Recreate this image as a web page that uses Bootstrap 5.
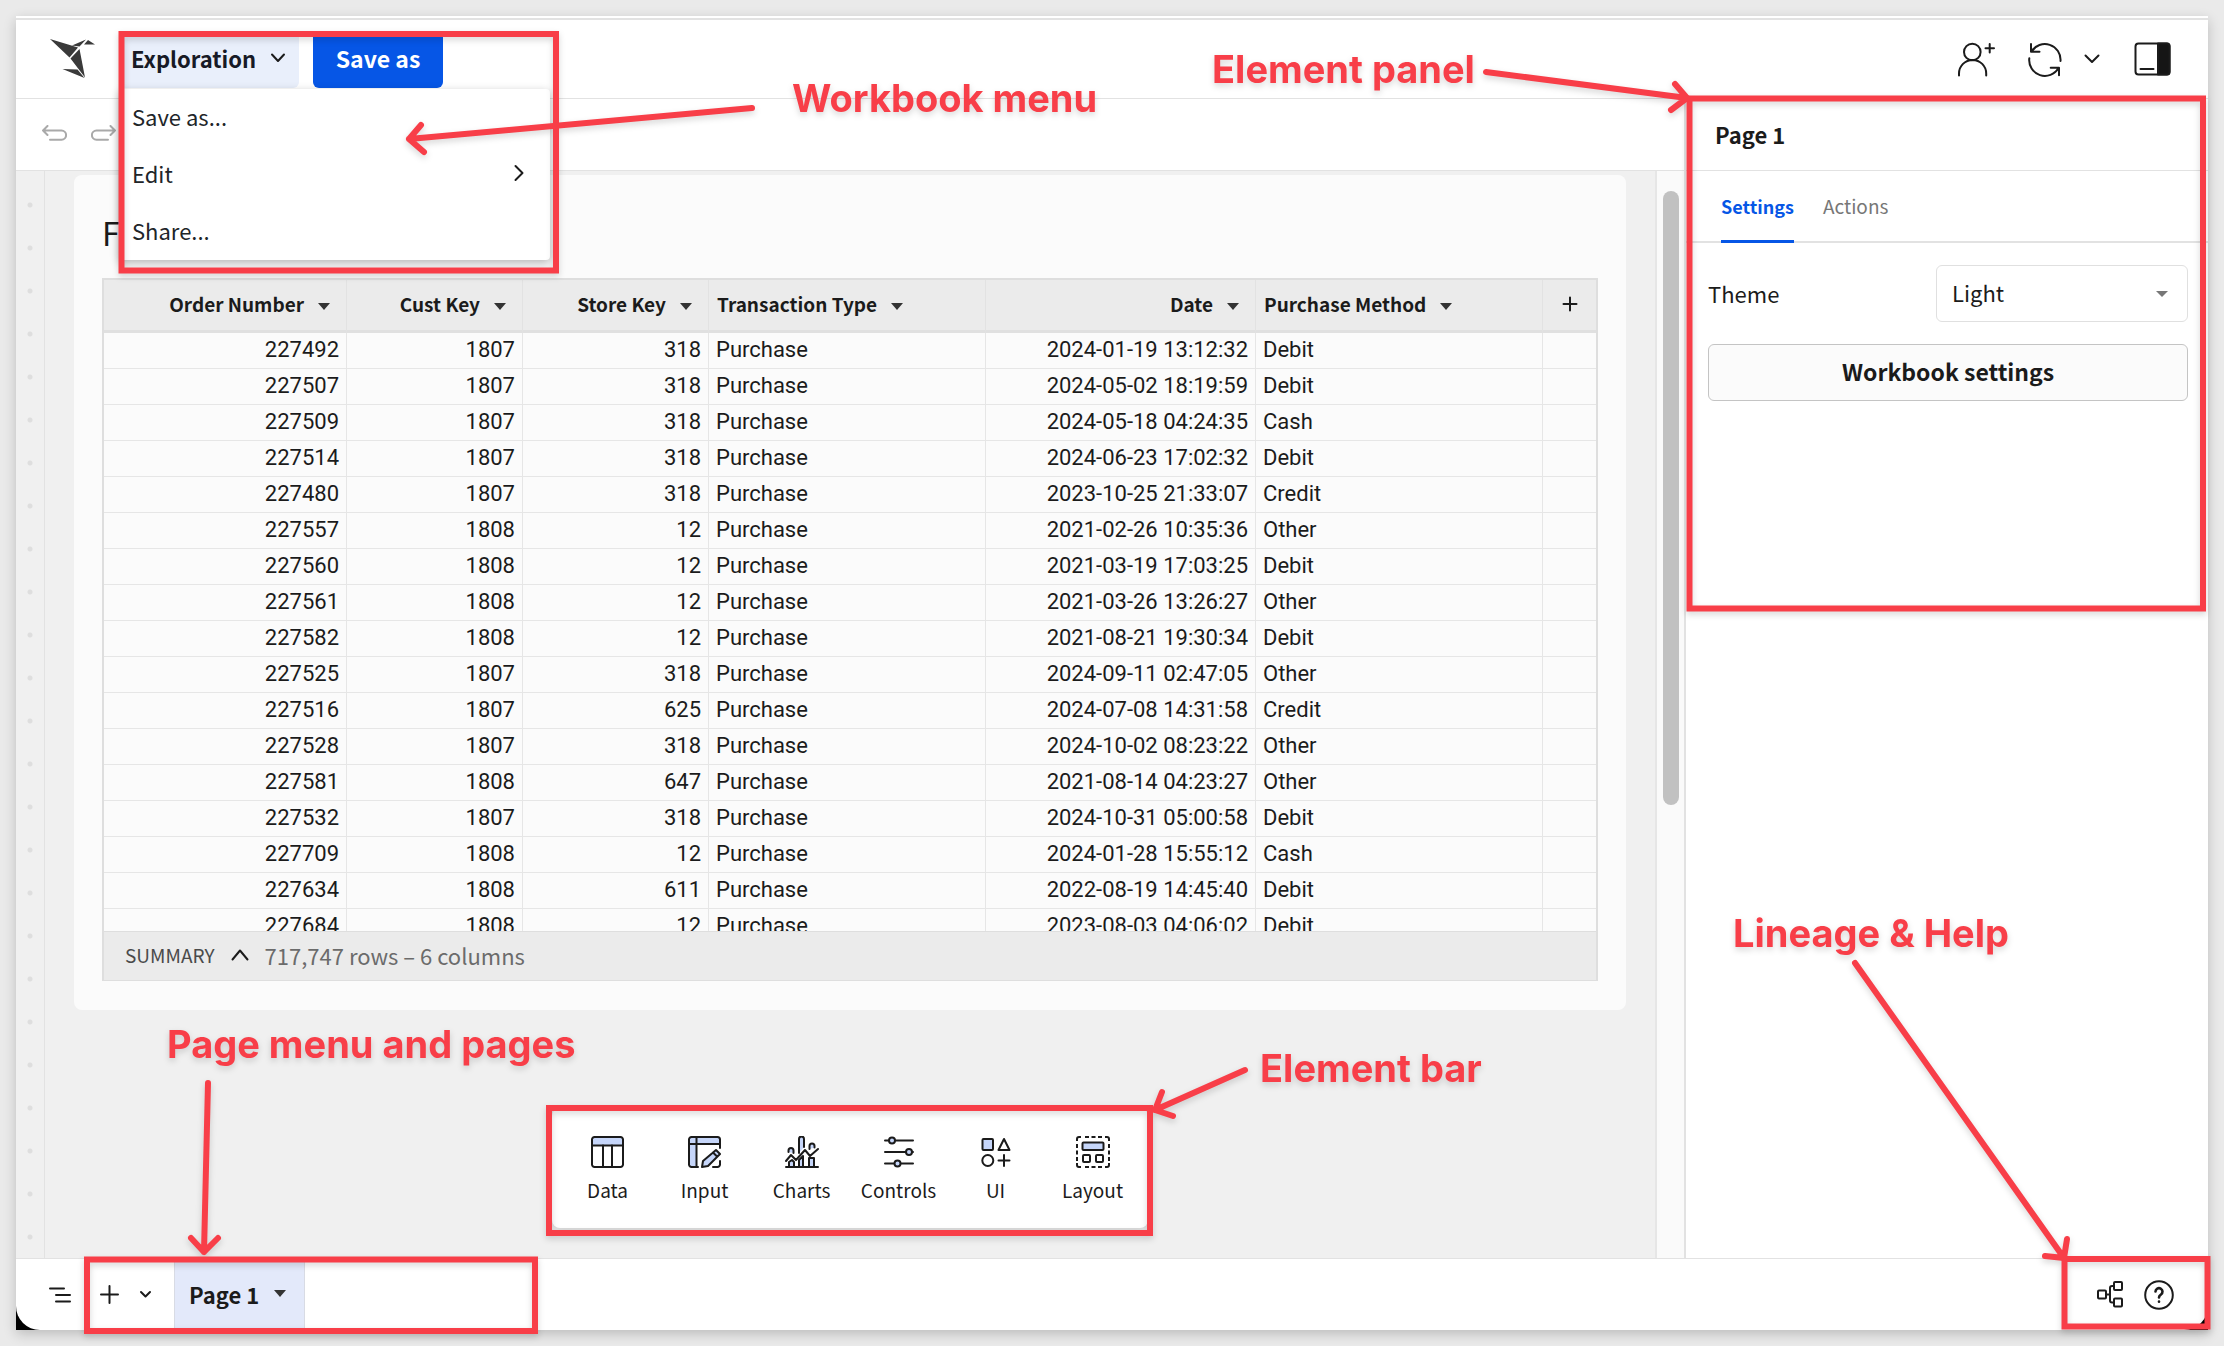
<!DOCTYPE html>
<html lang="en">
<head>
<meta charset="utf-8">
<meta name="viewport" content="width=device-width, initial-scale=1">
<title>Workbook</title>
<link rel="stylesheet" href="https://cdn.jsdelivr.net/npm/bootstrap@5.3.0/dist/css/bootstrap.min.css">
<style>
  :root { --line:#e2e2e2; --ink:#1b1b1b; --blue:#0656e6; --note:#f83e48; }
  body { background:#eaeaea; color:var(--ink); font-family:"Noto Sans CJK SC","Noto Sans",sans-serif; font-size:22px; line-height:32px; overflow:hidden; }
  svg { display:block; flex:none; }
  .ico { fill:none; stroke:var(--ink); stroke-width:2; stroke-linecap:round; stroke-linejoin:round; }
  .stage { min-height:100vh; padding:16px; }
  .app-window { background:#fff; box-shadow:0 4px 12px rgba(0,0,0,.2); border-top:2px solid #fff; }
  .plain-btn { background:none; border:0; padding:0; color:inherit; }

  .top-bar { height:81px; border-top:2px solid var(--line); border-bottom:1px solid var(--line); padding:0 37px 0 34px; }
  .doc-btn { height:57px; width:180px; padding:0 13px 2px 12px; background:#e9effb; border:0; border-radius:6px; font-weight:700; color:#171a26; }
  .save-btn { height:57px; width:130px; border-radius:6px; background:var(--blue); border:0; font-size:23px; font-weight:700; padding:0 0 2px; }
  .doc-menu { display:block; top:58px; left:0; width:431px; padding:0; border:0; border-radius:4px; box-shadow:0 3px 10px rgba(0,0,0,.28); font-size:22px; color:var(--ink); }
  .doc-menu .dropdown-item { height:57px; padding:0 26px 2px 13px; }
  .tool-bar { height:72px; border-bottom:1px solid var(--line); padding:0 0 3px 26px; }
  .tool-bar .ico { stroke:#a9a9a9; }

  .work-area { min-width:0; }
  .gutter { flex:none; width:29px; border-right:1px solid var(--line); background:#f0f0f0 radial-gradient(circle at 14px 21px,#dedede 2px,transparent 3px) 0 13px/29px 43px repeat-y; }
  .canvas { min-width:0; background:#f0f0f0; padding:4px 29px 30px; }
  .sheet { background:#fbfbfb; border-radius:8px; padding:33px 28px 29px; }
  .sheet h1 { font-size:32px; line-height:48px; font-weight:400; margin:0 0 22px; }
  .grid-box { border:1px solid #dedede; border-width:2px 2px 1px; }
  .grid-view { height:651px; overflow:hidden; }
  .data-grid { table-layout:fixed; width:100%; border-collapse:separate; border-spacing:0; }
  .data-grid th { height:53px; padding:0 8px 2px; background:#ebebeb; border-right:1px solid #e2e2e2; border-bottom:3px solid #e0e0e0; font-size:19px; font-weight:700; line-height:28px; white-space:nowrap; }
  .data-grid td { height:36px; padding:0 7px 2px; border-right:1px solid #e6e6e6; border-bottom:1px solid #e6e6e6; font-family:Roboto,sans-serif; font-size:22px; line-height:32px; white-space:nowrap; }
  .data-grid tr > :last-child { border-right:0; }
  .num { text-align:right; }
  .tri { display:inline-block; border:6px solid transparent; border-top:7px solid #333; border-bottom:0; margin:0 8px 2px 14px; }
  .sum-bar { height:49px; background:#ebebeb; border-top:1px solid #dedede; padding:0 0 2px 21px; color:#6b6b6b; }
  .sum-bar button { font-size:19px; color:#4a4a4a; }

  .scroll-lane { flex:none; width:29px; background:#fafafa; border-left:2px solid #e6e6e6; padding:20px 0 0 6px; }
  .thumb { width:16px; height:614px; border-radius:8px; background:#c1c1c1; }
  .element-bar { background:#fff; border-radius:8px; box-shadow:0 2px 6px rgba(0,0,0,.15); padding:28px 7px 26px; }
  .element-bar button { width:97px; font-size:19px; line-height:24px; gap:10px; }
  .element-bar .soft { fill:#c6d6fa; }

  .side-panel { width:524px; border-left:2px solid var(--line); background:#fff; }
  .side-title { height:72px; padding:0 0 2px 29px; border-bottom:1px solid var(--line); font-size:22px; line-height:32px; font-weight:700; margin:0; }
  .side-tabs { height:72px; border-bottom:2px solid var(--line); padding-left:35px; gap:29px; font-size:19px; }
  .side-tabs a { height:72px; padding-bottom:2px; color:#777; text-decoration:none; display:flex; align-items:center; }
  .side-tabs a.on { color:var(--blue); font-size:18px; font-weight:700; border-bottom:3px solid var(--blue); padding:1px 0 0; }
  .side-body { padding:22px 20px 0 22px; gap:22px; }
  .side-body label { padding-bottom:2px; }
  .theme-pick { width:252px; height:57px; border:1px solid #e0e0e0; border-radius:6px; padding:0 40px 2px 15px; font-size:22px; color:var(--ink); background-image:url("data:image/svg+xml,%3Csvg xmlns='http://www.w3.org/2000/svg' viewBox='0 0 12 6'%3E%3Cpath fill='%23777' d='M0 0h12L6 6z'/%3E%3C/svg%3E"); background-size:12px 6px; background-position:right 19px center; }
  .settings-btn { height:57px; padding:0 0 2px; background:#fbfbfb; border:1px solid #c4c4c4; border-radius:6px; font-size:23px; font-weight:700; color:var(--ink); }

  .foot-wrap { background:#000; }
  .foot-bar { height:72px; background:#fff; border-top:1px solid var(--line); border-radius:0 0 24px 24px; padding:0 34px 0 33px; }
  .page-tab { height:71px; width:131px; background:#e3e9fa; border:1px solid #d8dbe4; border-width:0 1px; padding:0 12px 2px 14px; font-weight:700; }
  .page-tab .tri { margin:0 6px 0 0; }

  .notes { position:absolute; left:0; top:0; pointer-events:none; z-index:2000; filter:drop-shadow(0 3px 3px rgba(0,0,0,.16)); fill:none; stroke:var(--note); stroke-width:6; stroke-linecap:round; stroke-linejoin:round; }
  .notes text { fill:var(--note); stroke:none; font:700 38px Inter,sans-serif; }
</style>
<script src="https://cdn.jsdelivr.net/npm/bootstrap@5.3.0/dist/js/bootstrap.bundle.min.js"></script>
</head>
<body>
<div class="stage d-flex position-relative">
<div class="app-window d-flex flex-column flex-grow-1">

  <header class="top-bar d-flex align-items-center">
    <svg width="46" height="42" viewBox="0 0 46 42" fill="#3a3a3a"><path d="M0 1 28 9.500 19.500 19.500zM20.500 20.500 29.500 11 35 39.500zM22 7.500 36 1.500 29.500 8.500zM38 2 45 6.500 34 6.500zM12.500 31 27.500 31.500 34.500 40z"/></svg>
    <div class="dropdown" style="margin-left:23px">
      <button class="doc-btn d-flex align-items-center justify-content-between" type="button" aria-expanded="true">Exploration
        <svg class="ico" width="16" height="10" viewBox="0 0 16 10"><path d="M2 1.500 8 8l6-6.500"/></svg></button>
      <div class="dropdown-menu doc-menu">
        <button class="dropdown-item" type="button">Save as...</button>
        <button class="dropdown-item d-flex align-items-center justify-content-between" type="button">Edit
          <svg class="ico" width="10" height="18" viewBox="0 0 10 18"><path d="m1.500 2 7 7-7 7"/></svg></button>
        <button class="dropdown-item" type="button">Share...</button>
      </div>
    </div>
    <button class="btn btn-primary save-btn" type="button" style="margin-left:14px">Save as</button>
    <div class="d-flex align-items-center ms-auto">
      <button class="plain-btn" type="button" aria-label="Share"><svg class="ico" width="39" height="36" viewBox="0 0 39 36"><circle cx="15.300" cy="11" r="8.300"/><path d="M2 34.500v-2a13.600 13.600 0 0 1 27.200 0v2M28.500 7.300h8.500M32.700 3v8.500"/></svg></button>
      <button class="plain-btn" type="button" aria-label="Refresh" style="margin-left:32px"><svg class="ico" width="35" height="37" viewBox="0 0 35 37"><path d="M3 3v7.700h8.500M3.500 10.500A15.700 15.700 0 0 1 32.500 20M1.300 17.300A15.700 15.700 0 0 0 30.500 27M31 34.300v-7.600h-8.300"/></svg></button>
      <button class="plain-btn" type="button" aria-label="Refresh options" style="margin-left:21px"><svg class="ico" width="16" height="10" viewBox="0 0 16 10"><path d="m1.500 1.500 6.500 6.500 6.500-6.500"/></svg></button>
      <button class="plain-btn" type="button" aria-label="Toggle panel" style="margin-left:34px"><svg class="ico" width="37" height="34" viewBox="0 0 37 34"><rect x="1.500" y="1.500" width="34" height="31" rx="3"/><path d="M24 1.500h9a2.500 2.500 0 0 1 2.500 2.500v26a2.500 2.500 0 0 1-2.500 2.500h-9z" fill="#151515"/><path d="M6.500 27h13"/></svg></button>
    </div>
  </header>

  <div class="d-flex flex-grow-1">
    <div class="work-area d-flex flex-column flex-grow-1">
      <div class="tool-bar d-flex align-items-center gap-4">
        <button class="plain-btn" type="button" aria-label="Undo"><svg class="ico" width="25" height="17" viewBox="0 0 25 17"><path d="M5.500 1 1 5.500 5.500 10M1 5.500h18.500a4.600 4.600 0 0 1 0 9.200H8"/></svg></button>
        <button class="plain-btn" type="button" aria-label="Redo"><svg class="ico" width="25" height="17" viewBox="0 0 25 17"><path d="M19.500 1 24 5.500 19.500 10M24 5.500H5.500a4.600 4.600 0 0 0 0 9.200H17"/></svg></button>
      </div>
      <div class="d-flex flex-grow-1">
        <div class="gutter"></div>
        <main class="canvas d-flex flex-column flex-grow-1">
          <section class="sheet">
            <h1>F</h1>
            <div class="grid-box">
              <div class="grid-view">
                <table class="data-grid">
                  <colgroup><col style="width:243px"><col style="width:176px"><col style="width:186px"><col style="width:277px"><col style="width:270px"><col style="width:287px"><col></colgroup>
                  <thead><tr>
                    <th class="num">Order Number<i class="tri"></i></th><th class="num">Cust Key<i class="tri"></i></th><th class="num">Store Key<i class="tri"></i></th><th>Transaction Type<i class="tri"></i></th><th class="num">Date<i class="tri"></i></th><th>Purchase Method<i class="tri"></i></th>
                    <th><svg class="ico mx-auto" width="16" height="16" viewBox="0 0 16 16"><path d="M1.500 8h13M8 1.500v13"/></svg></th>
                  </tr></thead>
                  <tbody>
                    <tr><td class="num">227492</td><td class="num">1807</td><td class="num">318</td><td>Purchase</td><td class="num">2024-01-19 13:12:32</td><td>Debit</td><td></td></tr>
                    <tr><td class="num">227507</td><td class="num">1807</td><td class="num">318</td><td>Purchase</td><td class="num">2024-05-02 18:19:59</td><td>Debit</td><td></td></tr>
                    <tr><td class="num">227509</td><td class="num">1807</td><td class="num">318</td><td>Purchase</td><td class="num">2024-05-18 04:24:35</td><td>Cash</td><td></td></tr>
                    <tr><td class="num">227514</td><td class="num">1807</td><td class="num">318</td><td>Purchase</td><td class="num">2024-06-23 17:02:32</td><td>Debit</td><td></td></tr>
                    <tr><td class="num">227480</td><td class="num">1807</td><td class="num">318</td><td>Purchase</td><td class="num">2023-10-25 21:33:07</td><td>Credit</td><td></td></tr>
                    <tr><td class="num">227557</td><td class="num">1808</td><td class="num">12</td><td>Purchase</td><td class="num">2021-02-26 10:35:36</td><td>Other</td><td></td></tr>
                    <tr><td class="num">227560</td><td class="num">1808</td><td class="num">12</td><td>Purchase</td><td class="num">2021-03-19 17:03:25</td><td>Debit</td><td></td></tr>
                    <tr><td class="num">227561</td><td class="num">1808</td><td class="num">12</td><td>Purchase</td><td class="num">2021-03-26 13:26:27</td><td>Other</td><td></td></tr>
                    <tr><td class="num">227582</td><td class="num">1808</td><td class="num">12</td><td>Purchase</td><td class="num">2021-08-21 19:30:34</td><td>Debit</td><td></td></tr>
                    <tr><td class="num">227525</td><td class="num">1807</td><td class="num">318</td><td>Purchase</td><td class="num">2024-09-11 02:47:05</td><td>Other</td><td></td></tr>
                    <tr><td class="num">227516</td><td class="num">1807</td><td class="num">625</td><td>Purchase</td><td class="num">2024-07-08 14:31:58</td><td>Credit</td><td></td></tr>
                    <tr><td class="num">227528</td><td class="num">1807</td><td class="num">318</td><td>Purchase</td><td class="num">2024-10-02 08:23:22</td><td>Other</td><td></td></tr>
                    <tr><td class="num">227581</td><td class="num">1808</td><td class="num">647</td><td>Purchase</td><td class="num">2021-08-14 04:23:27</td><td>Other</td><td></td></tr>
                    <tr><td class="num">227532</td><td class="num">1807</td><td class="num">318</td><td>Purchase</td><td class="num">2024-10-31 05:00:58</td><td>Debit</td><td></td></tr>
                    <tr><td class="num">227709</td><td class="num">1808</td><td class="num">12</td><td>Purchase</td><td class="num">2024-01-28 15:55:12</td><td>Cash</td><td></td></tr>
                    <tr><td class="num">227634</td><td class="num">1808</td><td class="num">611</td><td>Purchase</td><td class="num">2022-08-19 14:45:40</td><td>Debit</td><td></td></tr>
                    <tr><td class="num">227684</td><td class="num">1808</td><td class="num">12</td><td>Purchase</td><td class="num">2023-08-03 04:06:02</td><td>Debit</td><td></td></tr>
                  </tbody>
                </table>
              </div>
              <div class="sum-bar d-flex align-items-center gap-3">
                <button class="plain-btn d-flex align-items-center gap-3" type="button">SUMMARY <svg class="ico" width="18" height="12" viewBox="0 0 18 12"><path d="m1.500 10.500 7.500-9 7.500 9"/></svg></button>
                <span>717,747 rows – 6 columns</span>
              </div>
            </div>
          </section>
          <nav class="element-bar d-flex mt-auto mx-auto" aria-label="Add element">
            <button class="plain-btn d-flex flex-column align-items-center" type="button"><svg class="ico" width="33" height="32" viewBox="0 0 33 32"><path class="soft" d="M1 9.500V3.500A2.500 2.500 0 0 1 3.500 1h26A2.500 2.500 0 0 1 32 3.500v6z"/><path d="M1 9.500v19A2.500 2.500 0 0 0 3.500 31h26a2.500 2.500 0 0 0 2.500-2.500v-19M12 9.500V31M21 9.500V31"/></svg>Data</button>
            <button class="plain-btn d-flex flex-column align-items-center" type="button"><svg class="ico" width="33" height="32" viewBox="0 0 33 32"><path class="soft" d="M32 12V3.500A2.500 2.500 0 0 0 29.500 1h-26A2.500 2.500 0 0 0 1 3.500v25A2.500 2.500 0 0 0 3.500 31H8.500V8H32z" stroke="none"/><path d="M32 12V3.500A2.500 2.500 0 0 0 29.500 1h-26A2.500 2.500 0 0 0 1 3.500v25A2.500 2.500 0 0 0 3.500 31H10M8.500 1v30M1 8h31M32 25v3.500a2.500 2.500 0 0 1-2.500 2.500H25"/><path class="soft" d="M14 31l1-6 13-11 4 4-12 12zM25 16.500l4 4"/></svg>Input</button>
            <button class="plain-btn d-flex flex-column align-items-center" type="button"><svg class="ico" width="34" height="32" viewBox="0 0 34 32"><path class="soft" d="M14 17V3a2.500 2.500 0 0 1 5 0v8M3.500 16v-1.500a2.500 2.500 0 0 1 5 0V17M24.500 13V10a2.500 2.500 0 0 1 5 0v1.500M4 31V26l3-2 2 2v5M14 31v-7l4-4v11M24 31V22h5v9"/><path d="M1 31h32M1 25l5-6 5 5 9-10 5 6 8-7"/></svg>Charts</button>
            <button class="plain-btn d-flex flex-column align-items-center" type="button"><svg class="ico" width="30" height="32" viewBox="0 0 30 32"><path d="M1 4.500h28M1 16h28M1 27.500h28"/><circle class="soft" cx="8" cy="4.500" r="3"/><circle class="soft" cx="25" cy="16" r="3"/><circle class="soft" cx="13.500" cy="27.500" r="3"/></svg>Controls</button>
            <button class="plain-btn d-flex flex-column align-items-center" type="button"><svg class="ico" width="30" height="32" viewBox="0 0 30 32"><rect class="soft" x="1.500" y="3" width="10.500" height="11" rx="1"/><path d="M23 3l5.500 11h-11zM23 19v11M17.500 24.500h11"/><circle cx="6.800" cy="24.500" r="5.500"/></svg>UI</button>
            <button class="plain-btn d-flex flex-column align-items-center" type="button"><svg class="ico" width="34" height="32" viewBox="0 0 34 32"><path stroke-linecap="butt" style="stroke-linecap:butt" d="M1 5V3a2 2 0 0 1 2-2h2M9 1h4M15.500 1h4M22 1h4M29 1h2a2 2 0 0 1 2 2v2M33 8v4M33 14.500v4M33 21v4M33 27v2a2 2 0 0 1-2 2h-2M26 31h-4M19.500 31h-4M13 31H9M5 31H3a2 2 0 0 1-2-2v-2M1 25v-4M1 18.500v-4M1 12V8"/><rect class="soft" x="6.500" y="6.500" width="21" height="7.500" rx="1"/><rect x="7" y="19" width="7" height="7" rx="1"/><rect x="20" y="19" width="7" height="7" rx="1"/></svg>Layout</button>
          </nav>
        </main>
        <div class="scroll-lane"><div class="thumb"></div></div>
      </div>
    </div>

    <aside class="side-panel flex-shrink-0">
      <h2 class="side-title d-flex align-items-center">Page 1</h2>
      <nav class="side-tabs d-flex"><a class="on" href="#">Settings</a><a href="#">Actions</a></nav>
      <div class="side-body d-flex flex-column">
        <div class="d-flex align-items-center justify-content-between">
          <label for="theme">Theme</label>
          <select id="theme" class="form-select theme-pick"><option>Light</option></select>
        </div>
        <button class="btn settings-btn w-100" type="button">Workbook settings</button>
      </div>
    </aside>
  </div>

  <div class="foot-wrap">
    <footer class="foot-bar d-flex align-items-center">
      <button class="plain-btn" type="button" aria-label="Outline"><svg class="ico" width="22" height="16" viewBox="0 0 22 16"><path d="M1 1.500h14M7 8h14M7 14.500h14"/></svg></button>
      <button class="plain-btn" type="button" aria-label="Add page" style="margin-left:29px"><svg class="ico" width="19" height="19" viewBox="0 0 19 19"><path d="M1 9.500h17M9.500 1v17"/></svg></button>
      <button class="plain-btn" type="button" aria-label="Page options" style="margin-left:20px"><svg class="ico" width="13" height="9" viewBox="0 0 13 9"><path d="m2 2 4.500 4.500L11 2"/></svg></button>
      <button class="plain-btn page-tab d-flex align-items-center justify-content-between" type="button" style="margin-left:22px">Page 1<i class="tri"></i></button>
      <button class="plain-btn ms-auto" type="button" aria-label="Lineage"><svg class="ico" width="26" height="27" viewBox="0 0 26 27"><rect x="1" y="9.500" width="8" height="8" rx="1"/><rect x="17" y="1" width="8" height="8" rx="1"/><rect x="17" y="17.500" width="8" height="8" rx="1"/><path d="M9 13.500h4M17 5h-2a2 2 0 0 0-2 2v12.500a2 2 0 0 0 2 2h2"/></svg></button>
      <button class="plain-btn" type="button" aria-label="Help" style="margin-left:21px"><svg class="ico" width="30" height="30" viewBox="0 0 30 30"><circle cx="15" cy="15" r="13.800"/><path stroke-width="2.600" d="M11.500 11.500a3.500 3.500 0 1 1 5.500 3c-1.500 1-2 1.500-2 3M15 21.500v.2"/></svg></button>
    </footer>
  </div>
</div>

<svg class="notes" width="2224" height="1346" viewBox="0 0 2224 1346">
  <g stroke-linejoin="miter">
    <rect x="121.500" y="34" width="434.500" height="236.500"/>
    <rect x="1689.500" y="98.500" width="513.500" height="510"/>
    <rect x="549" y="1108" width="601" height="125"/>
    <rect x="87" y="1259.500" width="448" height="71.500"/>
    <rect x="2064.500" y="1259" width="143" height="67.500"/>
  </g>
  <path d="M752 108 409 139M421 125 409 139 424 152"/>
  <path d="M1486 72 1687 98M1675 84 1687 98 1671 110"/>
  <path d="M208 1083 204 1252M191 1238 204 1252 218 1238"/>
  <path d="M1245 1070 1155 1110M1162 1092 1155 1110 1173 1116"/>
  <path d="M1855 963 2064 1258M2067 1239 2064 1258 2045 1256"/>
  <text x="792" y="112">Workbook menu</text>
  <text x="1212" y="83">Element panel</text>
  <text x="167" y="1058">Page menu and pages</text>
  <text x="1260" y="1082">Element bar</text>
  <text x="1733" y="947">Lineage &amp; Help</text>
</svg>
</div>
</body>
</html>
